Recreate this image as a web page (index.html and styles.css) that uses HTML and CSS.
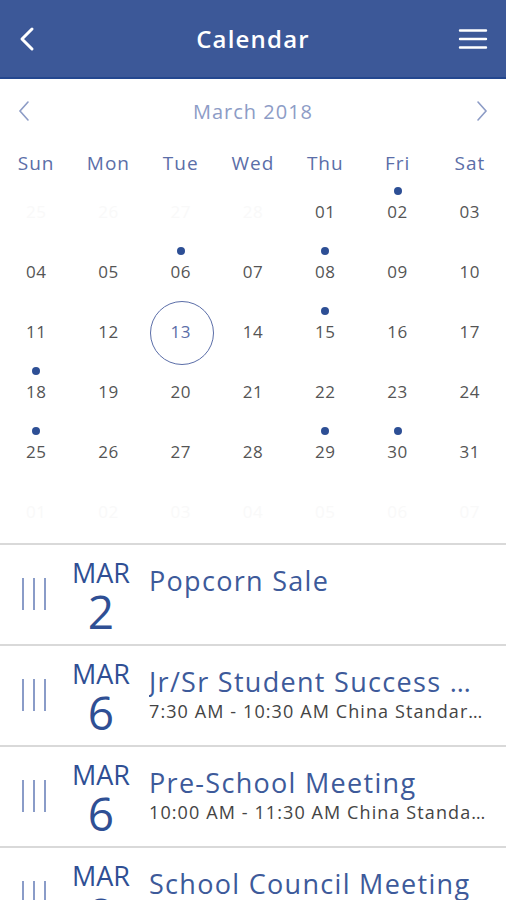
FILE: index.html
```html
<!DOCTYPE html>
<html lang="en">
<head>
    <meta charset="UTF-8">
    <title>Calendar</title>
    <link rel="stylesheet" href="styles.css">
</head>
<body>
<header class="topbar">
    <span class="topbar-btn">
        <svg width="18" height="26" viewBox="0 0 18 26"><path d="M14 3 L4 13 L14 23" fill="none" stroke="#fff" stroke-width="3" stroke-linecap="round" stroke-linejoin="round"/></svg>
    </span>
    <h1 class="topbar-title">Calendar</h1>
    <span class="topbar-btn">
        <svg width="30" height="24" viewBox="0 0 30 24"><path d="M2 3.5 H28 M2 12 H28 M2 20.5 H28" stroke="#fff" stroke-width="2.4" stroke-linecap="round"/></svg>
    </span>
</header>

<div class="month-nav">
    <svg width="12" height="22" viewBox="0 0 12 22"><path d="M10 2 L2 11 L10 20" fill="none" stroke="#8d9cc6" stroke-width="1.6" stroke-linecap="round"/></svg>
    <span class="month-label">March 2018</span>
    <svg width="12" height="22" viewBox="0 0 12 22"><path d="M2 2 L10 11 L2 20" fill="none" stroke="#8d9cc6" stroke-width="1.6" stroke-linecap="round"/></svg>
</div>

<div class="weekdays">
    <span>Sun</span><span>Mon</span><span>Tue</span><span>Wed</span><span>Thu</span><span>Fri</span><span>Sat</span>
</div>

<div class="days" id="days"></div>

<ul class="events">
    <li class="event">
        <div class="handle"><i></i><i></i><i></i></div>
        <div class="event-date"><span class="event-month">MAR</span><span class="event-day">2</span></div>
        <div class="event-info">
            <div class="event-title">Popcorn Sale</div>
        </div>
    </li>
    <li class="event">
        <div class="handle"><i></i><i></i><i></i></div>
        <div class="event-date"><span class="event-month">MAR</span><span class="event-day">6</span></div>
        <div class="event-info">
            <div class="event-title">Jr/Sr Student Success Workshop</div>
            <div class="event-time">7:30 AM - 10:30 AM China Standard Time</div>
        </div>
    </li>
    <li class="event">
        <div class="handle"><i></i><i></i><i></i></div>
        <div class="event-date"><span class="event-month">MAR</span><span class="event-day">6</span></div>
        <div class="event-info">
            <div class="event-title">Pre-School Meeting</div>
            <div class="event-time">10:00 AM - 11:30 AM China Standard Time</div>
        </div>
    </li>
    <li class="event">
        <div class="handle"><i></i><i></i><i></i></div>
        <div class="event-date"><span class="event-month">MAR</span><span class="event-day">8</span></div>
        <div class="event-info">
            <div class="event-title">School Council Meeting</div>
            <div class="event-time">6:00 PM - 7:30 PM China Standard Time</div>
        </div>
    </li>
</ul>

<script>
    (function () {
        const box = document.querySelector('#days');
        const marked = [2, 6, 8, 15, 18, 25, 29, 30];
        const today = 13;
        let cells = [];

        // previous / next month, drawn almost invisible
        [25, 26, 27, 28].forEach(d => cells.push({ n: d, faint: true }));
        for (let d = 1; d <= 31; d++) cells.push({ n: d });
        for (let d = 1; cells.length < 42; d++) cells.push({ n: d, faint: true });

        cells.forEach(c => {
            let cell = document.createElement('div');
            cell.className = 'day';
            let dot = document.createElement('span');
            dot.className = 'dot' + (!c.faint && marked.includes(c.n) ? ' on' : '');
            let num = document.createElement('span');
            num.className = 'num' + (c.faint ? ' faint' : '') + (!c.faint && c.n === today ? ' today' : '');
            num.textContent = String(c.n).padStart(2, '0');
            cell.appendChild(dot);
            cell.appendChild(num);
            box.appendChild(cell);
        });
    })()
</script>
</body>
</html>
```

FILE: styles.css
```css
* {
    box-sizing: border-box;
}

body {
    margin: 0;
    background: #fff;
    font-family: "Open Sans", "Liberation Sans", sans-serif;
    overflow: hidden;
}

.topbar {
    display: flex;
    justify-content: space-between;
    align-items: center;
    height: 79px;
    padding: 0 18px 0 18px;
    background: #3c5898;
    border-bottom: 2px solid #24478f;
}

.topbar-btn {
    display: flex;
    align-items: center;
    width: 30px;
}

.topbar-title {
    margin: 0;
    color: #fff;
    font-size: 24px;
    font-weight: 600;
    letter-spacing: 1.2px;
}

.month-nav {
    display: flex;
    justify-content: space-between;
    align-items: center;
    height: 64px;
    padding: 0 18px;
}

.month-label {
    color: #8d9cc6;
    font-size: 20px;
    letter-spacing: 1px;
}

.weekdays {
    display: grid;
    grid-template-columns: repeat(7, 1fr);
    height: 40px;
    align-items: center;
    text-align: center;
    color: #5b6ea8;
    font-size: 19px;
    letter-spacing: 1px;
}

.days {
    display: grid;
    grid-template-columns: repeat(7, 1fr);
    grid-auto-rows: 60px;
}

.day {
    display: flex;
    flex-direction: column;
    align-items: center;
}

.dot {
    width: 8px;
    height: 8px;
    margin-top: 4px;
    border-radius: 50%;
}

.dot.on {
    background: #2d4f95;
}

.num {
    position: relative;
    margin-top: 5px;
    line-height: 24px;
    font-size: 17px;
    letter-spacing: 0.5px;
    color: #555;
}

.num.faint {
    color: #f9f9f9;
}

.num.today {
    color: #5b6ea8;
}

.num.today::before {
    content: "";
    position: absolute;
    left: 50%;
    top: 50%;
    width: 62px;
    height: 62px;
    margin: -31px 0 0 -31px;
    border: 1.5px solid #5b6ea8;
    border-radius: 50%;
}

.events {
    list-style: none;
    margin: 0;
    padding: 0;
}

.event {
    display: flex;
    align-items: flex-start;
    height: 101px;
    padding: 13px 20px 0 22px;
    border-top: 2px solid #d9d9d9;
}

.handle {
    display: flex;
    gap: 9px;
    margin-top: 20px;
}

.handle i {
    width: 2px;
    height: 32px;
    background: #8a9cc8;
}

.event-date {
    display: flex;
    flex-direction: column;
    align-items: center;
    width: 64px;
    margin-left: 23px;
    color: #2f4f94;
}

.event-month {
    font-size: 27px;
    line-height: 30px;
}

.event-day {
    font-size: 46px;
    line-height: 46px;
}

.event-info {
    flex: 1;
    min-width: 0;
    margin-left: 16px;
    padding-top: 4px;
}

.event-title {
    overflow: hidden;
    white-space: nowrap;
    text-overflow: ellipsis;
    color: #3d5a9a;
    font-size: 27px;
    line-height: 38px;
    letter-spacing: 1.3px;
}

.event-time {
    overflow: hidden;
    white-space: nowrap;
    text-overflow: ellipsis;
    margin-top: -3px;
    color: #444;
    font-size: 18px;
    line-height: 26px;
    letter-spacing: 1.1px;
}
```
